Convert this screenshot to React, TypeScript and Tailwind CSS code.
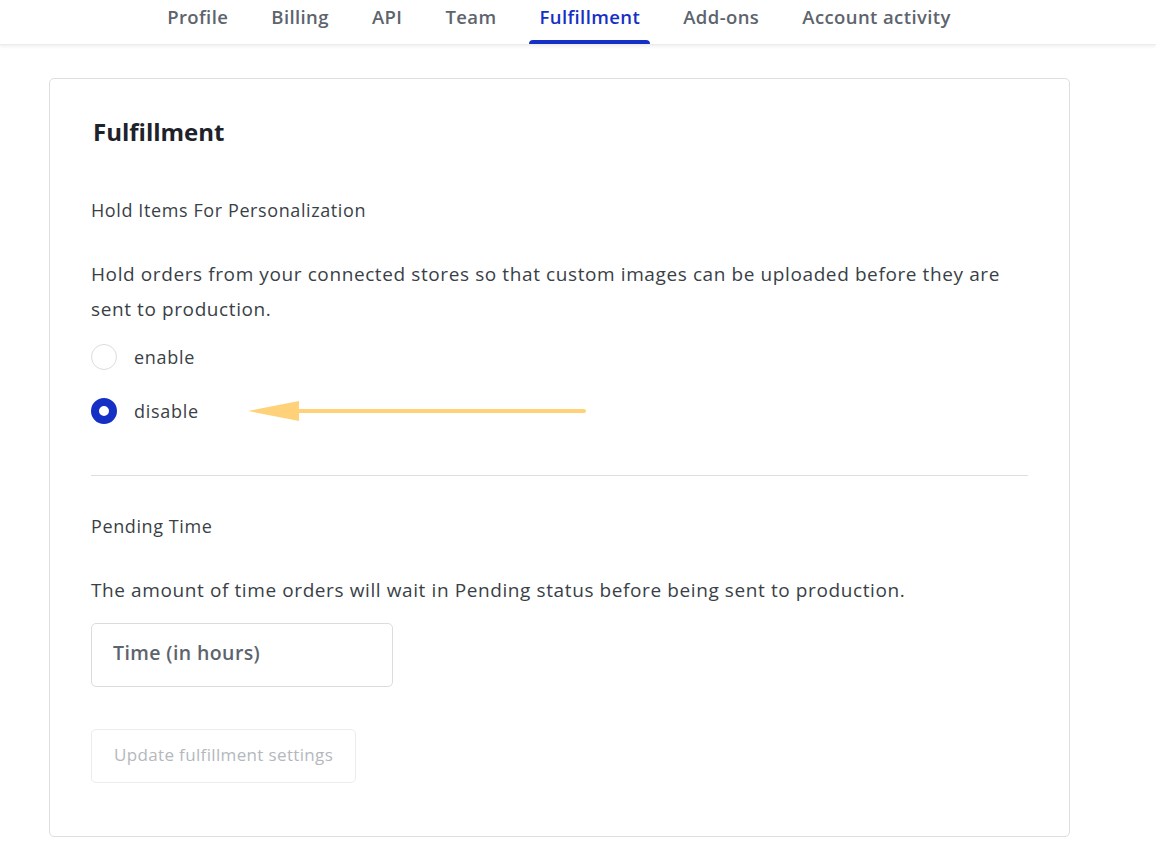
import { useState } from 'react'

const tabs = ['Profile', 'Billing', 'API', 'Team', 'Fulfillment', 'Add-ons', 'Account activity']

const font = { fontFamily: '"Open Sans", "Noto Sans", sans-serif' }

function Radio({ checked, label, onClick }: { checked: boolean; label: string; onClick: () => void }) {
  return (
    <button onClick={onClick} className="flex items-center gap-[17px] h-[26px]">
      {checked ? (
        <span className="w-[26px] h-[26px] rounded-full border-[8px] border-[#1530c4] bg-white" />
      ) : (
        <span className="w-[26px] h-[26px] rounded-full border border-[#dcdcdc] bg-white" />
      )}
      <span className="text-[18px] tracking-[0.7px] text-[#3a3f47]">{label}</span>
    </button>
  )
}

export default function App() {
  const [hold, setHold] = useState(false)

  return (
    <div className="min-h-screen bg-white" style={font}>
      {/* Tabs */}
      <nav className="h-[45px] flex justify-center shadow-[0_2px_3px_rgba(0,0,0,0.06)] border-b border-[#ececec]">
        <div className="flex gap-[23px] mr-[38px]">
          {tabs.map((t) => (
            <div
              key={t}
              className={`relative px-[10px] pt-[3px] text-[18.5px] tracking-[0.4px] font-semibold ${
                t === 'Fulfillment' ? 'text-[#1530c4]' : 'text-[#5d646d]'
              }`}
            >
              {t}
              {t === 'Fulfillment' && (
                <span className="absolute left-0 right-0 bottom-0 h-[4px] rounded-t-[4px] bg-[#1530c4]" />
              )}
            </div>
          ))}
        </div>
      </nav>

      {/* Card */}
      <div className="ml-[49px] mt-[33px] w-[1021px] border border-[#dedede] rounded-[5px] px-[41px] pt-[37px] pb-[53px]">
        <h1 className="ml-[2px] text-[24px] leading-[32px] font-bold text-[#1d222b]">Fulfillment</h1>

        <h2 className="mt-[50px] text-[18px] tracking-[0.6px] leading-[24px] text-[#3a3f47]">
          Hold Items For Personalization
        </h2>
        <p className="mt-[35px] max-w-[915px] text-[19px] tracking-[0.6px] leading-[35px] text-[#3a3f47]">
          Hold orders from your connected stores so that custom images can be uploaded before they are sent to
          production.
        </p>

        <div className="mt-[17px] flex flex-col gap-[28px] items-start">
          <Radio checked={hold} label="enable" onClick={() => setHold(true)} />
          <div className="flex items-center">
            <Radio checked={!hold} label="disable" onClick={() => setHold(false)} />
            <svg width="340" height="24" viewBox="0 0 340 24" className="ml-[49px]">
              <polygon points="0,12 51,2 51,22" fill="#ffd27a" />
              <line x1="48" y1="12" x2="336" y2="12" stroke="#ffd27a" strokeWidth="4" strokeLinecap="round" />
            </svg>
          </div>
        </div>

        <div className="mt-[51px] border-t border-[#dedede]" />

        <h2 className="mt-[38px] text-[18px] tracking-[0.6px] leading-[24px] text-[#3a3f47]">Pending Time</h2>
        <p className="mt-[35px] text-[19px] tracking-[0.6px] leading-[35px] text-[#3a3f47]">
          The amount of time orders will wait in Pending status before being sent to production.
        </p>

        <input
          placeholder="Time (in hours)"
          className="mt-[15px] block w-[302px] h-[64px] border border-[#dcdcdc] rounded-[5px] px-[21px] pb-[6px] text-[19.5px] tracking-[0.4px] font-semibold placeholder:text-[#5d646d] outline-none"
        />

        <button
          disabled
          className="mt-[42px] block h-[54px] px-[22px] pb-[3px] border border-[#ececec] rounded-[5px] text-[17px] tracking-[0.35px] text-[#b4b8bd]"
        >
          Update fulfillment settings
        </button>
      </div>
    </div>
  )
}
